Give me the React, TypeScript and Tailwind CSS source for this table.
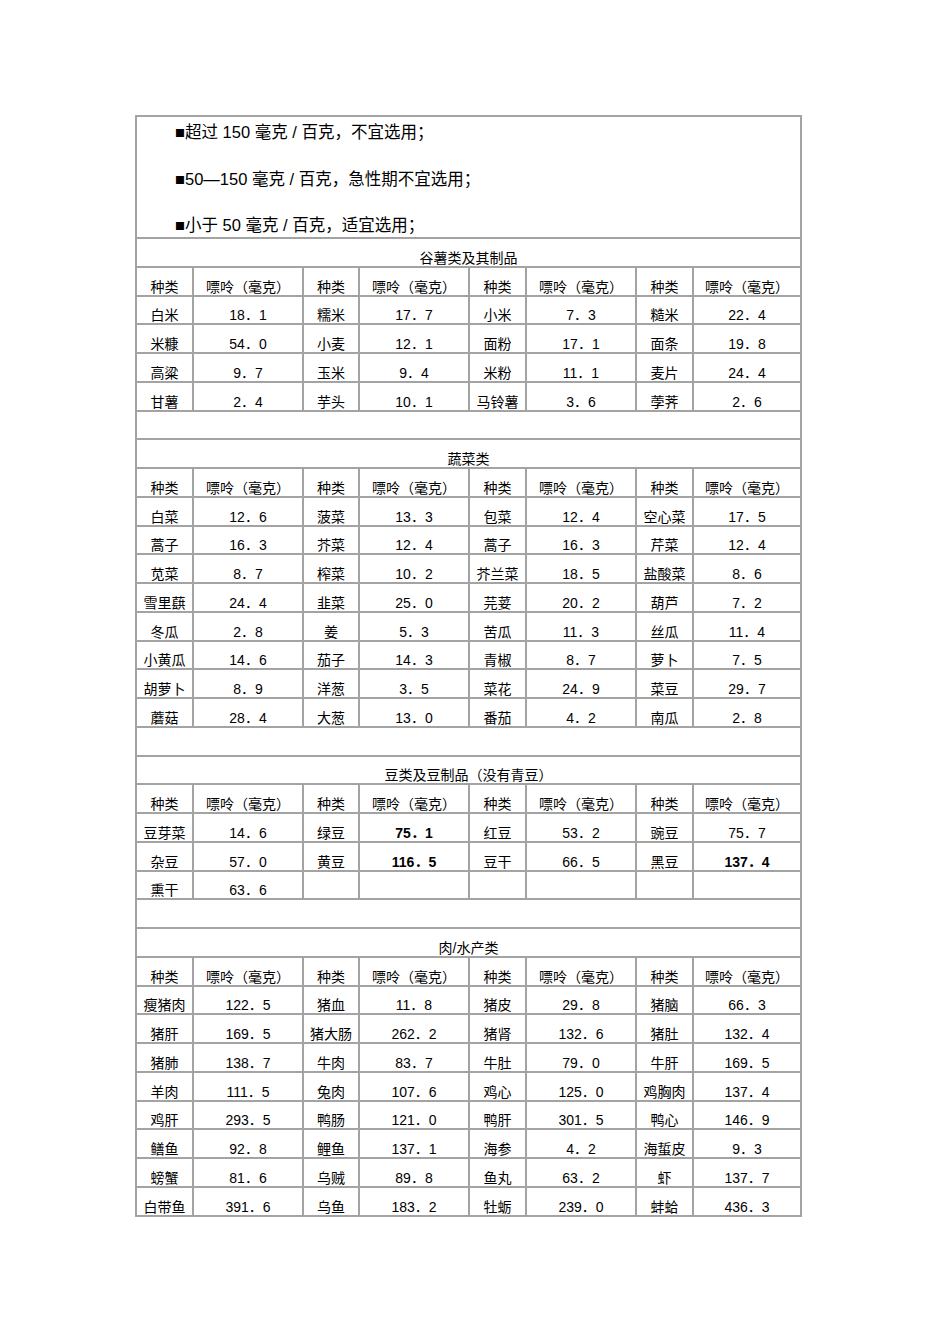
import React from "react";

type Cell = { name: string; val: string; bold?: boolean } | null;

const widths = ["w-[55px]", "w-[110px]", "w-[56px]", "w-[110px]", "w-[57px]", "w-[110px]", "w-[57px]", "w-[108px]"];

const sections: { title: string; rows: Cell[][]; blankAfter: boolean }[] = [
  {
    title: "谷薯类及其制品",
    blankAfter: true,
    rows: [
      [{ name: "白米", val: "18．1" }, { name: "糯米", val: "17．7" }, { name: "小米", val: "7．3" }, { name: "糙米", val: "22．4" }],
      [{ name: "米糠", val: "54．0" }, { name: "小麦", val: "12．1" }, { name: "面粉", val: "17．1" }, { name: "面条", val: "19．8" }],
      [{ name: "高粱", val: "9．7" }, { name: "玉米", val: "9．4" }, { name: "米粉", val: "11．1" }, { name: "麦片", val: "24．4" }],
      [{ name: "甘薯", val: "2．4" }, { name: "芋头", val: "10．1" }, { name: "马铃薯", val: "3．6" }, { name: "荸荠", val: "2．6" }],
    ],
  },
  {
    title: "蔬菜类",
    blankAfter: true,
    rows: [
      [{ name: "白菜", val: "12．6" }, { name: "菠菜", val: "13．3" }, { name: "包菜", val: "12．4" }, { name: "空心菜", val: "17．5" }],
      [{ name: "蒿子", val: "16．3" }, { name: "芥菜", val: "12．4" }, { name: "蒿子", val: "16．3" }, { name: "芹菜", val: "12．4" }],
      [{ name: "苋菜", val: "8．7" }, { name: "榨菜", val: "10．2" }, { name: "芥兰菜", val: "18．5" }, { name: "盐酸菜", val: "8．6" }],
      [{ name: "雪里蕻", val: "24．4" }, { name: "韭菜", val: "25．0" }, { name: "芫荽", val: "20．2" }, { name: "葫芦", val: "7．2" }],
      [{ name: "冬瓜", val: "2．8" }, { name: "姜", val: "5．3" }, { name: "苦瓜", val: "11．3" }, { name: "丝瓜", val: "11．4" }],
      [{ name: "小黄瓜", val: "14．6" }, { name: "茄子", val: "14．3" }, { name: "青椒", val: "8．7" }, { name: "萝卜", val: "7．5" }],
      [{ name: "胡萝卜", val: "8．9" }, { name: "洋葱", val: "3．5" }, { name: "菜花", val: "24．9" }, { name: "菜豆", val: "29．7" }],
      [{ name: "蘑菇", val: "28．4" }, { name: "大葱", val: "13．0" }, { name: "番茄", val: "4．2" }, { name: "南瓜", val: "2．8" }],
    ],
  },
  {
    title: "豆类及豆制品（没有青豆）",
    blankAfter: true,
    rows: [
      [{ name: "豆芽菜", val: "14．6" }, { name: "绿豆", val: "75．1", bold: true }, { name: "红豆", val: "53．2" }, { name: "豌豆", val: "75．7" }],
      [{ name: "杂豆", val: "57．0" }, { name: "黄豆", val: "116．5", bold: true }, { name: "豆干", val: "66．5" }, { name: "黑豆", val: "137．4", bold: true }],
      [{ name: "熏干", val: "63．6" }, null, null, null],
    ],
  },
  {
    title: "肉/水产类",
    blankAfter: false,
    rows: [
      [{ name: "瘦猪肉", val: "122．5" }, { name: "猪血", val: "11．8" }, { name: "猪皮", val: "29．8" }, { name: "猪脑", val: "66．3" }],
      [{ name: "猪肝", val: "169．5" }, { name: "猪大肠", val: "262．2" }, { name: "猪肾", val: "132．6" }, { name: "猪肚", val: "132．4" }],
      [{ name: "猪肺", val: "138．7" }, { name: "牛肉", val: "83．7" }, { name: "牛肚", val: "79．0" }, { name: "牛肝", val: "169．5" }],
      [{ name: "羊肉", val: "111．5" }, { name: "兔肉", val: "107．6" }, { name: "鸡心", val: "125．0" }, { name: "鸡胸肉", val: "137．4" }],
      [{ name: "鸡肝", val: "293．5" }, { name: "鸭肠", val: "121．0" }, { name: "鸭肝", val: "301．5" }, { name: "鸭心", val: "146．9" }],
      [{ name: "鳝鱼", val: "92．8" }, { name: "鲤鱼", val: "137．1" }, { name: "海参", val: "4．2" }, { name: "海蜇皮", val: "9．3" }],
      [{ name: "螃蟹", val: "81．6" }, { name: "乌贼", val: "89．8" }, { name: "鱼丸", val: "63．2" }, { name: "虾", val: "137．7" }],
      [{ name: "白带鱼", val: "391．6" }, { name: "乌鱼", val: "183．2" }, { name: "牡蛎", val: "239．0" }, { name: "蚌蛤", val: "436．3" }],
    ],
  },
];

const rowCls = "flex h-[28.76px] border-t-2 border-[#a3a3a3]";

function DataRow({ cells, header }: { cells: Cell[]; header?: boolean }) {
  const items: { text: string; bold?: boolean }[] = [];
  cells.forEach((c) => {
    if (header) {
      items.push({ text: "种类" }, { text: "嘌呤（毫克）" });
    } else if (c) {
      items.push({ text: c.name }, { text: c.val, bold: c.bold });
    } else {
      items.push({ text: "" }, { text: "" });
    }
  });
  return (
    <div className={rowCls}>
      {items.map((it, i) => (
        <div
          key={i}
          className={`${widths[i]} shrink-0 flex items-end justify-center leading-[16px] whitespace-nowrap ${i > 0 ? "border-l-2 border-[#a3a3a3]" : ""} ${it.bold ? "font-bold" : ""}`}
        >
          {it.text}
        </div>
      ))}
    </div>
  );
}

export default function App() {
  return (
    <div className="min-h-[1344px] w-[950px] bg-white pt-[115px] pl-[135px] text-[14px] text-black" style={{ fontFamily: '"Liberation Sans", "Noto Sans CJK SC", sans-serif' }}>
      <div className="w-[667px] border-2 border-[#a3a3a3]">
        <div className="h-[120px] pl-[38px] pt-[5px] flex flex-col gap-[26.5px] text-[16.5px] leading-5">
          <div>■超过 150 毫克 / 百克，不宜选用；</div>
          <div>■50—150 毫克 / 百克，急性期不宜选用；</div>
          <div>■小于 50 毫克 / 百克，适宜选用；</div>
        </div>
        {sections.map((s, si) => (
          <React.Fragment key={si}>
            <div className={`${rowCls} items-end justify-center leading-[16px]`}>{s.title}</div>
            <DataRow cells={[null, null, null, null]} header />
            {s.rows.map((r, ri) => (
              <DataRow key={ri} cells={r} />
            ))}
            {s.blankAfter && <div className={rowCls}></div>}
          </React.Fragment>
        ))}
      </div>
    </div>
  );
}
